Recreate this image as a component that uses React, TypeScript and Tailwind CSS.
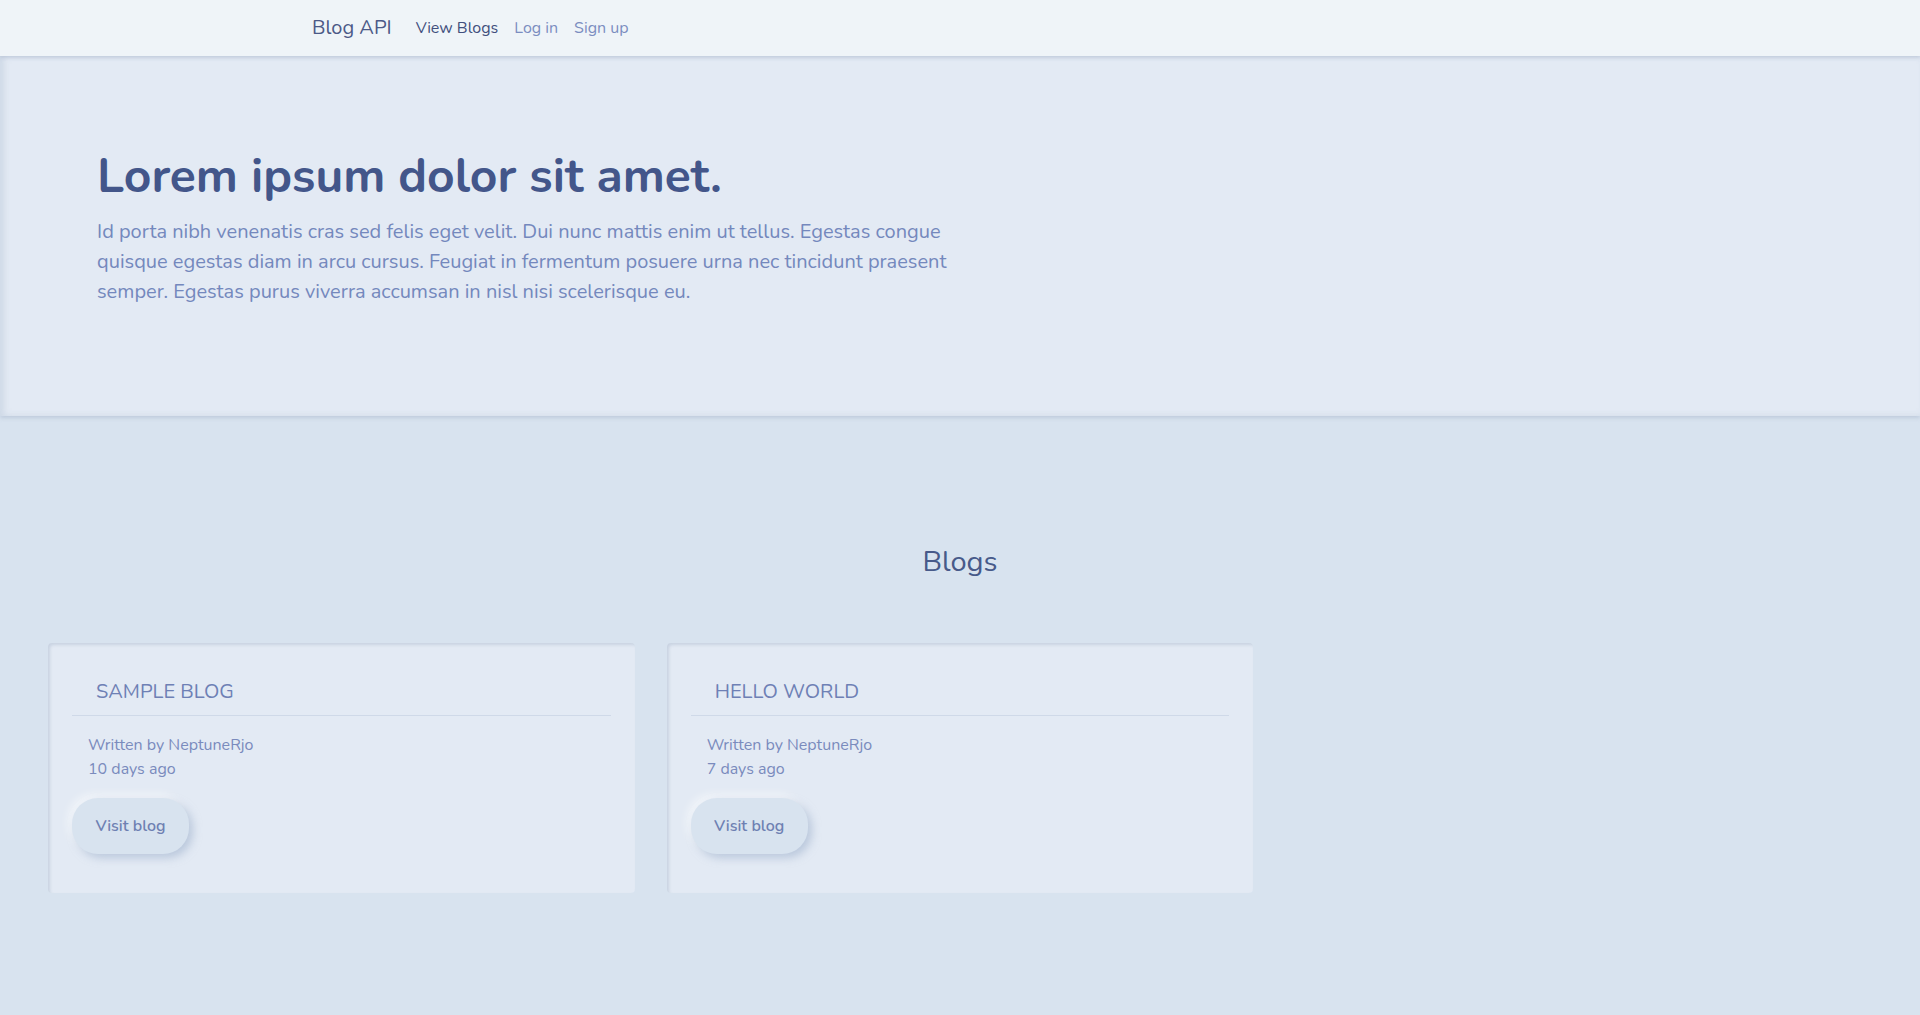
import React from "react";

const font = { fontFamily: '"Nunito", "Lato", "Noto Sans", sans-serif' };

function BlogCard({ title, ago }: { title: string; ago: string }) {
  return (
    <div className="bg-[#e3eaf4] rounded-[4px] shadow-[inset_2px_2px_3px_rgba(170,185,205,0.45)] px-6 pt-[35px] pb-[39px]">
      <div className="border-b border-[#cfd9e8] pb-[9px]">
        <h3 className="pl-6 text-[20px] leading-[28px] text-[#6e80b5] uppercase">{title}</h3>
      </div>
      <div className="px-4 pt-[17px] text-[16px] leading-[24px] text-[#7a8bbd]">
        <p>Written by NeptuneRjo</p>
        <p>{ago}</p>
      </div>
      <div className="pt-[17px]">
        <button className="h-[56px] w-[117px] rounded-[26px] bg-[#d8e3ef] text-[16px] font-semibold text-[#6e80b2] shadow-[4px_4px_8px_rgba(160,178,205,0.6),-4px_-4px_8px_rgba(255,255,255,0.55)]">
          Visit blog
        </button>
      </div>
    </div>
  );
}

export default function App() {
  return (
    <div style={font} className="min-h-[1015px] bg-[#d8e3ef]">
      <nav className="relative z-10 h-[56px] bg-[#eff4f8] shadow-[0_1px_4px_rgba(150,165,190,0.45)]">
        <div className="mx-auto flex h-full max-w-[1320px] items-center px-3">
          <span className="mr-4 text-[20px] text-[#4b5987]">Blog API</span>
          <span className="px-2 text-[16px] text-[#414f7d]">View Blogs</span>
          <span className="px-2 text-[16px] text-[#7b8dc0]">Log in</span>
          <span className="px-2 text-[16px] text-[#7b8dc0]">Sign up</span>
        </div>
      </nav>
      <section className="h-[360px] bg-[#e3eaf4] shadow-[inset_4px_0_6px_rgba(170,185,205,0.35),0_2px_4px_rgba(160,175,200,0.45)] pl-[97px] pt-[92px]">
        <h1 className="text-[48px] font-bold leading-[56px] text-[#43568a]">Lorem ipsum dolor sit amet.</h1>
        <p className="mt-[13px] w-[860px] text-[20px] leading-[30px] text-[#7488bd]">
          Id porta nibh venenatis cras sed felis eget velit. Dui nunc mattis enim ut tellus. Egestas congue quisque egestas diam in arcu cursus. Feugiat in fermentum posuere urna nec tincidunt praesent semper. Egestas purus viverra accumsan in nisl nisi scelerisque eu.
        </p>
      </section>
      <section className="px-12 pt-[126px] pb-[120px]">
        <h2 className="text-center text-[29px] leading-[40px] text-[#475a8a]">Blogs</h2>
        <div className="mt-[61px] grid grid-cols-3 gap-8">
          <BlogCard title="Sample blog" ago="10 days ago" />
          <BlogCard title="Hello world" ago="7 days ago" />
        </div>
      </section>
    </div>
  );
}
